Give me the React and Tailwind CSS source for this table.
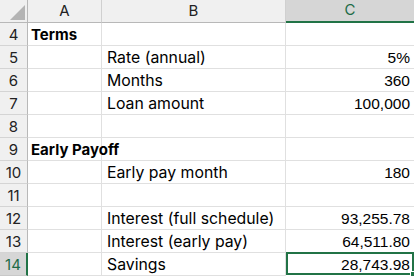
import React from "react";

const rows = [
  { n: 4, a: "Terms", bold: true },
  { n: 5, b: "Rate (annual)", c: "5%" },
  { n: 6, b: "Months", c: "360" },
  { n: 7, b: "Loan amount", c: "100,000" },
  { n: 8 },
  { n: 9, a: "Early Payoff", bold: true },
  { n: 10, b: "Early pay month", c: "180" },
  { n: 11 },
  { n: 12, b: "Interest (full schedule)", c: "93,255.78" },
  { n: 13, b: "Interest (early pay)", c: "64,511.80" },
  { n: 14, b: "Savings", c: "28,743.98", sel: true },
];

export default function App() {
  return (
    <div
      className="w-[414px] h-[278px] overflow-hidden bg-white text-[15px] text-black"
      style={{ fontFamily: "Inter, 'Liberation Sans', sans-serif" }}
    >
      <div className="grid grid-cols-[28px_74px_184px_128px]">
        {/* header */}
        <div className="relative h-[23px] bg-[#f0f0f0] border-r border-b border-[#b8b8b8]">
          <div className="absolute right-[2px] bottom-[2px] w-0 h-0 border-l-[15px] border-l-transparent border-b-[15px] border-b-[#b4b4b4]" />
        </div>
        <div className="h-[23px] bg-[#f0f0f0] border-r border-b border-[#d0d0d0] border-b-[#b8b8b8] flex items-center justify-center text-[#222]">A</div>
        <div className="h-[23px] bg-[#f0f0f0] border-r border-b border-[#d0d0d0] border-b-[#b8b8b8] flex items-center justify-center text-[#222]">B</div>
        <div className="h-[23px] bg-[#d6d6d6] border-b-2 border-[#217346] flex items-center justify-center text-[#1e6b47]">C</div>

        {rows.map((r) => (
          <React.Fragment key={r.n}>
            <div
              className={
                r.sel
                  ? "h-[23px] bg-[#d6d6d6] border-r-2 border-r-[#217346] border-b border-b-[#c8c8c8] flex items-center justify-center pt-[2px] text-[#1e6b47]"
                  : "h-[23px] bg-[#f0f0f0] border-r border-r-[#b8b8b8] border-b border-b-[#d4d4d4] flex items-center justify-center pt-[2px] text-[#222]"
              }
            >
              {r.n}
            </div>
            <div className="h-[23px] border-r border-b border-[#e0e0e0] flex items-center pt-[2px] pl-[3px] whitespace-nowrap overflow-visible">
              {r.a ? <span className="font-bold relative z-10">{r.a}</span> : null}
            </div>
            <div className="h-[23px] border-r border-b border-[#e0e0e0] flex items-center pt-[2px] pl-[5px] whitespace-nowrap text-[15.8px]">
              {r.b}
            </div>
            <div
              className={
                r.sel
                  ? "relative h-[23px] border-2 border-[#217346] -mt-px flex items-center justify-end pt-[2px] pr-[2px] font-['Liberation_Sans',sans-serif] text-[15.5px]"
                  : "h-[23px] border-b border-[#e0e0e0] flex items-center justify-end pt-[2px] pr-[4px] font-['Liberation_Sans',sans-serif] text-[15.5px]"
              }
            >
              {r.c}
              {r.sel ? (
                <div className="absolute -right-[4px] -bottom-[4px] w-[6px] h-[6px] bg-[#217346] border border-white" />
              ) : null}
            </div>
          </React.Fragment>
        ))}
      </div>
    </div>
  );
}
